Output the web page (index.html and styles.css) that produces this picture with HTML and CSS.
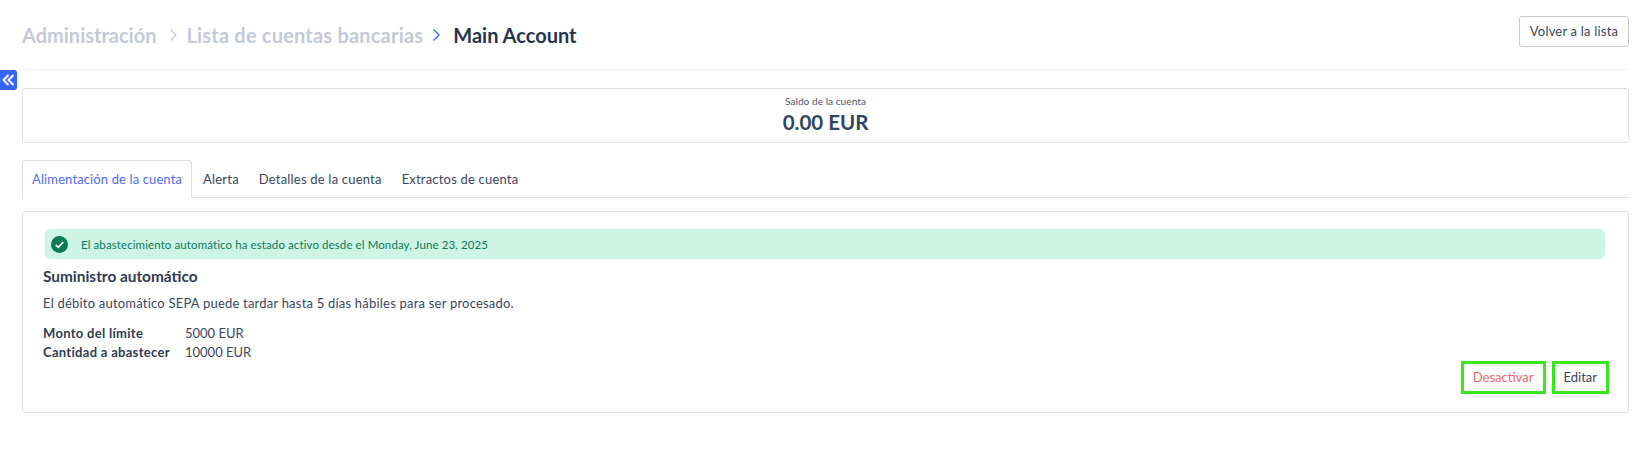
FILE: index.html
```html
<!DOCTYPE html>
<html lang="es">
<head>
  <meta charset="UTF-8">
  <meta name="viewport" content="width=device-width, initial-scale=1.0">
  <title>Main Account</title>
  <link rel="stylesheet" href="styles.css">
</head>
<body>
  <button class="sidebar_toggle" aria-label="Plegar">
    <svg width="13" height="12" viewBox="0 0 13 12" fill="none" stroke="#fff" stroke-width="2">
      <path d="M6.500 1 1.500 6l5 5"/>
      <path d="M11.500 1 6.500 6l5 5"/>
    </svg>
  </button>

  <div class="page">
    <!-- cabecera -->
    <header class="page_header">
      <nav class="breadcrumb">
        <span class="crumb">Administración</span>
        <svg class="crumb_sep crumb_sep_first" width="9" height="14" viewBox="0 0 9 14" fill="none" stroke="#c3c9d8" stroke-width="1.3"><path d="M1.500 1.500 7 7l-5.500 5.500"/></svg>
        <span class="crumb crumb_wide">Lista de cuentas bancarias</span>
        <svg class="crumb_sep crumb_sep_last" width="9" height="14" viewBox="0 0 9 14" fill="none" stroke="#3366ff" stroke-width="1.3"><path d="M1.500 1.500 7 7l-5.500 5.500"/></svg>
        <span class="crumb crumb_current">Main Account</span>
      </nav>
      <button class="btn_back">Volver a la lista</button>
    </header>

    <!-- saldo -->
    <section class="balance_card">
      <div class="balance_label">Saldo de la cuenta</div>
      <div class="balance_value">0.00 EUR</div>
    </section>

    <!-- tabs -->
    <div class="tabs">
      <a class="tab tab_active">Alimentación de la cuenta</a>
      <a class="tab">Alerta</a>
      <a class="tab">Detalles de la cuenta</a>
      <a class="tab">Extractos de cuenta</a>
    </div>

    <section class="panel">
      <div class="notice">
        <svg width="17" height="17" viewBox="0 0 17 17">
          <circle cx="8.500" cy="8.500" r="8.500" fill="#0b7a57"/>
          <path d="M4.700 8.800 7.300 11.300 12.300 6" fill="none" stroke="#fff" stroke-width="1.600"/>
        </svg>
        <span>El abastecimiento automático ha estado activo desde el Monday, June 23, 2025</span>
      </div>
      <h3 class="panel_title">Suministro automático</h3>
      <p class="panel_desc">El débito automático SEPA puede tardar hasta 5 días hábiles para ser procesado.</p>
      <dl class="details">
        <dt>Monto del límite</dt>
        <dd>5000 EUR</dd>
        <dt>Cantidad a abastecer</dt>
        <dd>10000 EUR</dd>
      </dl>
      <div class="panel_actions">
        <button class="btn_action btn_danger">Desactivar</button>
        <button class="btn_action">Editar</button>
      </div>
    </section>
  </div>
</body>
</html>
```

FILE: styles.css
```css
* {
  box-sizing: border-box;
}
body {
  margin: 0;
  background: #fff;
  font-family: "Lato", "Liberation Sans", sans-serif;
  color: #3a4660;
}
button {
  font-family: inherit;
  background: transparent;
  cursor: pointer;
}

.sidebar_toggle {
  position: absolute;
  top: 70px;
  left: 0;
  width: 17px;
  height: 20px;
  padding: 0;
  border: 0;
  border-radius: 0 3px 3px 0;
  background: #3366ff;
  display: flex;
  align-items: center;
  justify-content: center;
}

.page {
  padding: 0 20px 0 22px;
}

/* cabecera */
.page_header {
  height: 70px;
  padding-top: 16px;
  display: flex;
  justify-content: space-between;
  align-items: flex-start;
  border-bottom: 1px solid #edeff1;
}
.breadcrumb {
  display: flex;
  align-items: center;
  height: 38px;
  font-size: 20px;
  font-weight: 700;
}
.crumb {
  color: #c3c9d8;
}
.crumb_wide {
  letter-spacing: 0.2px;
}
.crumb_current {
  color: #26344d;
  font-weight: 700;
}
.crumb_sep {
  margin: 0 11px 0 13px;
}
.crumb_sep_first {
  margin-right: 8px;
}
.crumb_sep_last {
  margin: 0 12px 0 9px;
}
.btn_back {
  width: 110px;
  height: 31px;
  padding: 0 0 2px;
  border: 1px solid #c9cacc;
  border-radius: 3px;
  font-size: 13px;
  letter-spacing: 0.2px;
  color: #3a4660;
}

/* saldo */
.balance_card {
  margin-top: 18px;
  height: 55px;
  padding-top: 5px;
  border: 1px solid #dfdfdf;
  border-radius: 3px;
  text-align: center;
}
.balance_label {
  font-size: 10.200px;
  line-height: 14px;
  color: #4d5a70;
}
.balance_value {
  font-size: 20.500px;
  font-weight: 700;
  line-height: 28px;
  color: #2f4560;
}

/* tabs */
.tabs {
  margin-top: 17px;
  height: 38px;
  display: flex;
  border-bottom: 1px solid #dfdfdf;
}
.tab {
  height: 37px;
  padding: 0 10px;
  display: flex;
  align-items: center;
  font-size: 13px;
  letter-spacing: 0.2px;
  color: #3a4660;
}
.tab_active {
  height: 38px;
  padding: 0 9px 2px;
  margin-right: 1px;
  letter-spacing: 0.12px;
  color: #4f6bf5;
  background: #fff;
  border: 1px solid #dfdfdf;
  border-bottom: 0;
  border-radius: 3px 3px 0 0;
}

.panel {
  margin-top: 13px;
  height: 202px;
  padding: 17px 19px 18px 20px;
  display: flex;
  flex-direction: column;
  border: 1px solid #dfdfdf;
  border-radius: 3px;
}
.notice {
  height: 31px;
  margin: 0 4px 0 2px;
  padding-left: 6px;
  display: flex;
  align-items: center;
  gap: 13px;
  background: #cef4e6;
  border-radius: 6px;
  font-size: 11.500px;
  letter-spacing: 0.1px;
  color: #0b7a57;
}
.panel_title {
  margin: 8px 0 0;
  font-size: 15.400px;
  line-height: 18px;
  font-weight: 700;
  color: #2f3b52;
}
.panel_desc {
  margin: 9px 0 0;
  font-size: 13px;
  line-height: 18px;
  letter-spacing: 0.21px;
}
.details {
  margin: 11px 0 0;
  display: grid;
  grid-template-columns: 142px 1fr;
  grid-auto-rows: 19px;
  align-items: center;
  font-size: 13px;
}
.details dt {
  font-weight: 700;
  letter-spacing: 0.3px;
  color: #2f3b52;
}
.details dd {
  margin: 0;
}
.panel_actions {
  margin-top: auto;
  display: flex;
  justify-content: flex-end;
  gap: 6px;
}
.btn_action {
  height: 33px;
  padding: 0 9px 2px;
  border: 3px solid #39e81a;
  font-size: 13px;
  color: #3a4660;
}
.btn_danger {
  color: #f0686e;
}
```
